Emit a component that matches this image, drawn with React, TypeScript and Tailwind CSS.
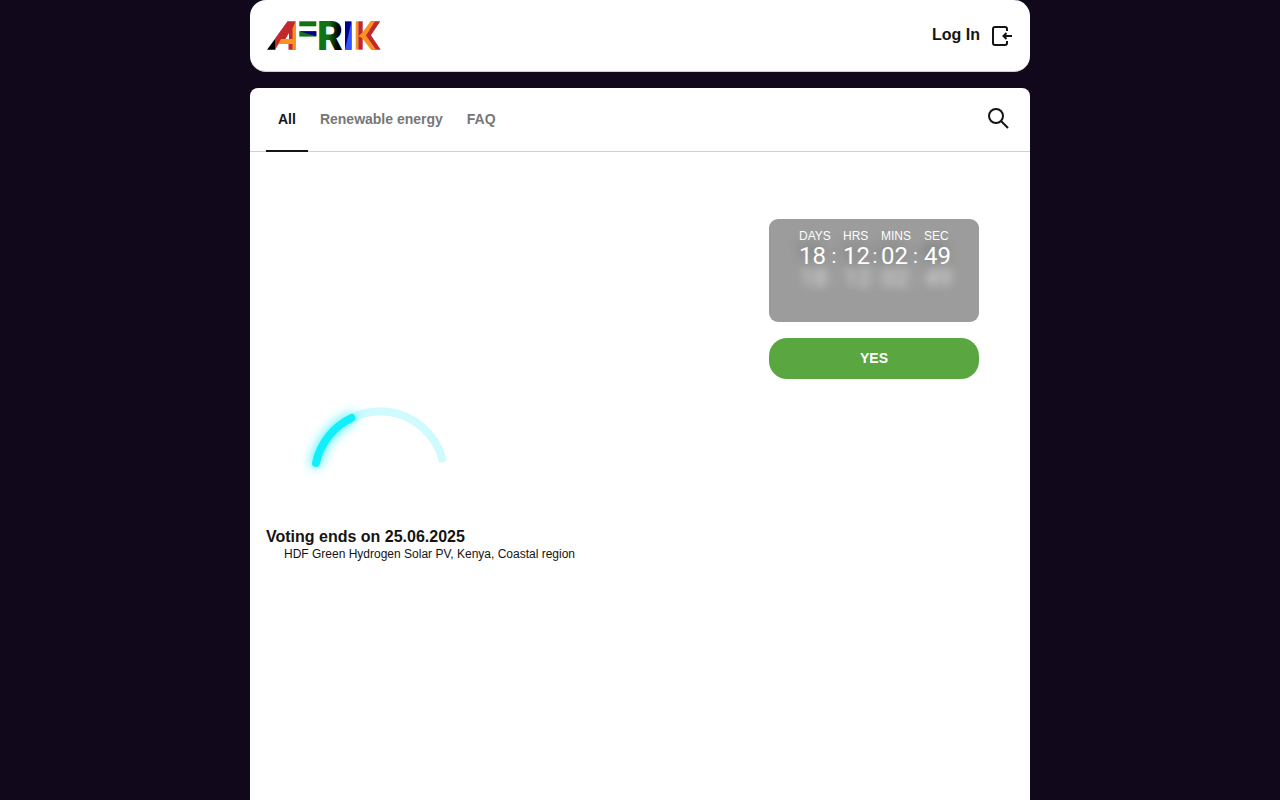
const tabs = [
  { label: "All", active: true },
  { label: "Renewable energy", active: false },
  { label: "FAQ", active: false },
];

const countdown = [
  { label: "DAYS", value: "18", width: "w-11" },
  { label: "HRS", value: "12", width: "w-[38px]" },
  { label: "MINS", value: "02", width: "w-[43px]" },
  { label: "SEC", value: "49", width: "w-[25px]" },
];

function Logo() {
  return (
    <svg
      width="114"
      height="32"
      viewBox="0 0 114 32"
      className="overflow-visible"
      role="img"
      aria-label="AFRIK"
    >
      <defs>
        <linearGradient id="r-fill" x1="0" x2="1" y1="0.2" y2="0.3">
          <stop offset="0.45" stopColor="#0f7414" />
          <stop offset="0.85" stopColor="#000" />
        </linearGradient>
      </defs>
      <path d="M0 29.700L8.300 18.500V29.700z" fill="#000" />
      <path d="M20.500 1.300H28.500V29.700H21.500V24H11.500L8 29.700V18.500z" fill="#c1272d" />
      <path d="M28.500 1.300V29.700H25.500V24H11.800L8 29.700L14 19H19L26 7.500z" fill="#f7931e" />
      <path d="M22 13L25.500 8V19H22z" fill="#c1272d" />
      <path d="M18.500 19L22 13V19z" fill="#fff" />
      <path d="M32.300 1.300H49.300V6.300H32.300z" fill="#0f7414" />
      <path d="M32.300 11.200H49.300V16.600H32.300z" fill="#0f7414" />
      <path d="M32.300 11.200H49.300V16.200z" fill="#00008b" />
      <text
        x="50"
        y="29.700"
        fontSize="40"
        fontWeight="900"
        fontFamily="Roboto, sans-serif"
        fill="url(#r-fill)"
      >
        R
      </text>
      <path d="M78 1.300H84.500V29.700H78z" fill="#00008b" />
      <path d="M84.500 1.300V29.700H78z" fill="#3355ff" />
      <path d="M88.700 1.300H91.500V29.700H88.700z" fill="#f7931e" />
      <path d="M91.300 1.300H95.700V29.700H91.300z" fill="#c1272d" />
      <path d="M104 1.300H113.300L104 15.300L113.700 29.700H105L95.500 17z" fill="#c1272d" />
      <path d="M103.500 1.300H108L99 15.500L109 29.700H104L95.500 18.500L91.500 16L95.500 12.500z" fill="#f7931e" />
    </svg>
  );
}

function LoginIcon() {
  return (
    <svg width="24" height="24" viewBox="0 0 24 24" fill="none" stroke="#141414" strokeWidth="2" aria-hidden="true">
      <path d="M17 7V5Q17 3 15 3H5Q3 3 3 5V19Q3 21 5 21H15Q17 21 17 19V17" />
      <path d="M22 12H14" />
      <path d="M16.500 9L13.500 12L16.500 15" />
    </svg>
  );
}

function SearchIcon() {
  return (
    <svg width="24" height="24" viewBox="0 0 24 24" fill="none" stroke="#141414" strokeWidth="2" aria-hidden="true">
      <circle cx="10" cy="9" r="7" />
      <path d="M15 14L22 21" />
    </svg>
  );
}

function Gauge() {
  return (
    <svg width="170" height="110" viewBox="0 0 170 110" className="overflow-visible" aria-hidden="true">
      <path d="M22 74A65 65 0 0 1 149 73" fill="none" stroke="#cffafe" strokeWidth="8" />
      <path
        d="M22 74A65 65 0 0 1 57.500 29"
        fill="none"
        stroke="#11effb"
        strokeWidth="8"
        strokeLinecap="round"
        className="drop-shadow-[0_0_6px_#11effb]"
      />
    </svg>
  );
}

function Countdown() {
  return (
    <div
      role="timer"
      className="flex h-[103px] justify-center rounded-[9px] bg-[#9c9c9c] pt-2 text-white"
    >
      {countdown.map((unit, i) => (
        <div key={unit.label} className={`${unit.width} shrink-0`}>
          <div className="text-xs leading-[18px]">{unit.label}</div>
          <div className="flex h-[22px] items-center font-[Roboto,sans-serif] text-2xl leading-[22px] [text-shadow:-4px_-4px_12px_rgba(0,0,0,0.3),1px_22px_10px_rgba(255,255,255,0.7)]">
            <span className="w-[26px] shrink-0">{unit.value}</span>
            {i < countdown.length - 1 && <span className="flex-1 text-center text-xl leading-[22px]">:</span>}
          </div>
        </div>
      ))}
    </div>
  );
}

export default function App() {
  return (
    <div className="flex min-h-screen flex-col bg-[#12081c] font-['Liberation_Sans',Arial,sans-serif] text-[#141414]">
      <div className="mx-auto flex w-full max-w-[780px] grow flex-col gap-4">
        <header className="flex h-[72px] items-center justify-between rounded-2xl border-b border-[#d0d0d0] bg-white px-4">
          <a href="#home" className="pl-px">
            <Logo />
          </a>
          <a href="#login" className="flex items-center gap-2.5">
            <span className="pb-0.5 text-base font-bold">Log In</span>
            <LoginIcon />
          </a>
        </header>

        <main className="grow rounded-t-lg bg-white">
          <div className="flex h-16 items-stretch justify-between border-b border-[#d0d0d0] px-4">
            <nav className="-mb-px flex text-sm font-bold">
              {tabs.map((tab) => (
                <a
                  key={tab.label}
                  href="#tab"
                  className={
                    tab.active
                      ? "flex items-center border-b-2 border-[#141414] px-3"
                      : "flex items-center border-b-2 border-transparent px-3 text-[#777777]"
                  }
                >
                  {tab.label}
                </a>
              ))}
            </nav>
            <button type="button" aria-label="Search" className="pr-1 pb-0.5">
              <SearchIcon />
            </button>
          </div>

          <div className="flex justify-between pl-4 pt-[67px]">
            <section className="pt-[170px]">
              <div className="pl-7">
                <Gauge />
              </div>
              <h1 className="mt-7 text-base leading-5 font-bold">Voting ends on 25.06.2025</h1>
              <p className="pl-[18px] text-xs leading-[14px]">HDF Green Hydrogen Solar PV, Kenya, Coastal region</p>
            </section>
            <aside className="mr-[51px] flex w-[210px] flex-col gap-4">
              <Countdown />
              <button type="button" className="h-[41px] rounded-[18px] bg-[#5aa641] pb-0.5 text-sm font-bold text-white">
                YES
              </button>
            </aside>
          </div>
        </main>
      </div>
    </div>
  );
}
